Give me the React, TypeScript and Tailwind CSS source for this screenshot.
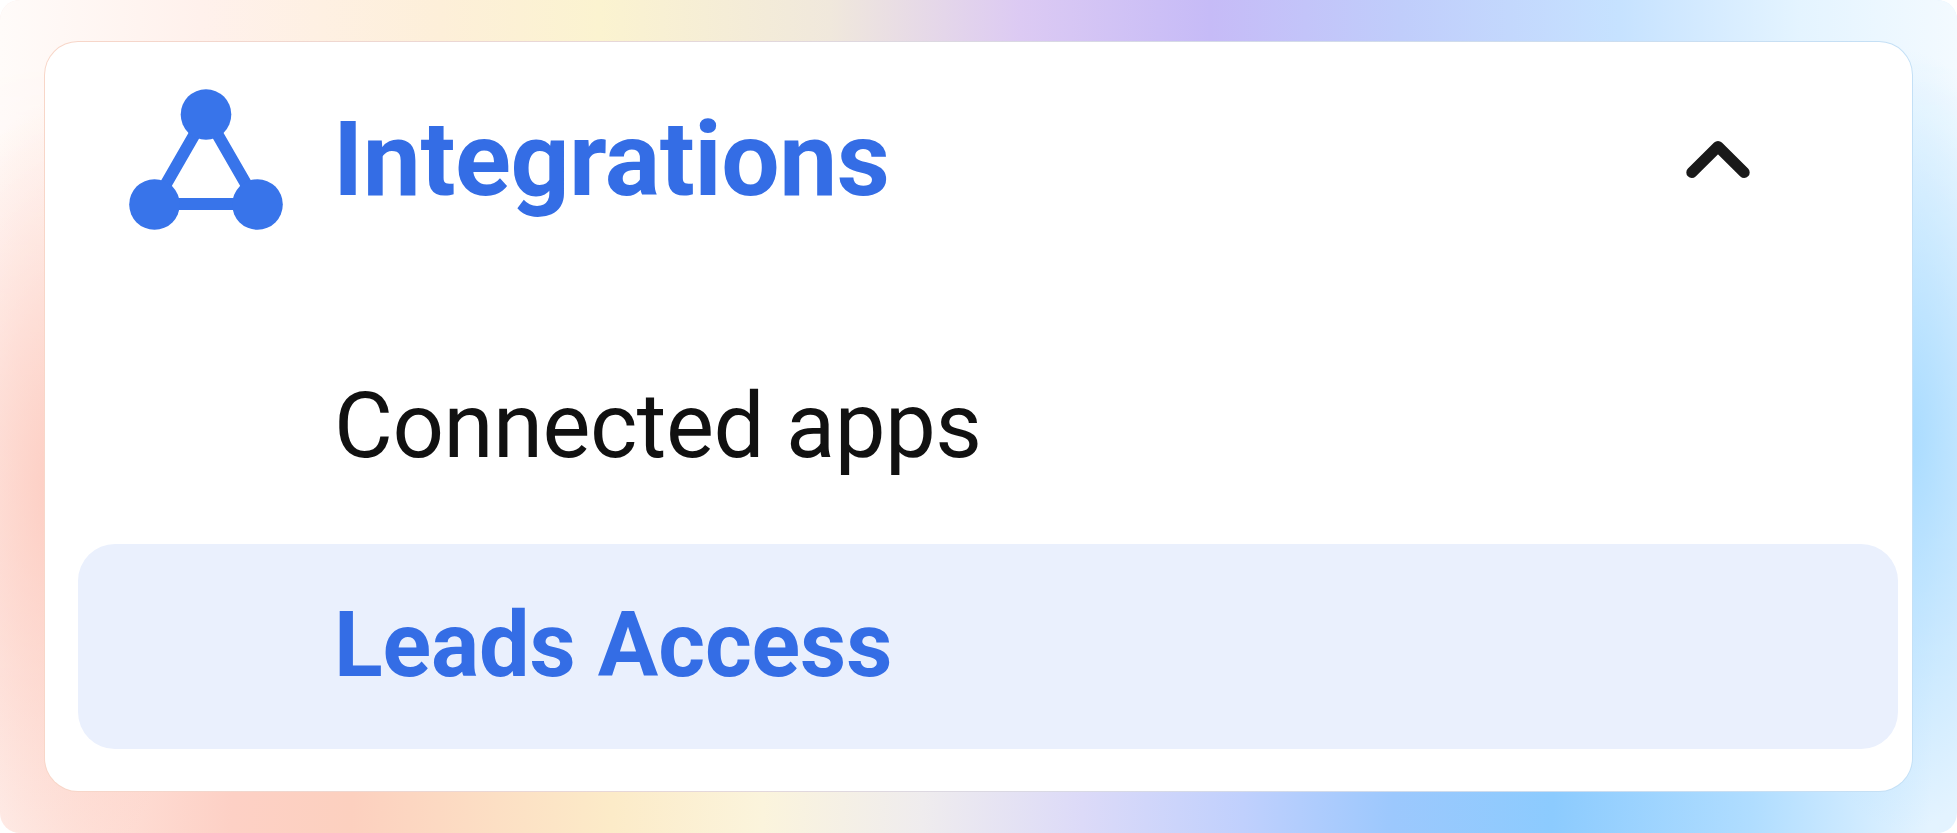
import React from 'react';

const ConnectionsIcon: React.FC = () => (
  <svg className="h-[142px] w-[155px] shrink-0" viewBox="0 0 155 142" fill="#3874ea">
    <path d="M78 26.5 L26.5 116 H129.5 Z" fill="none" stroke="#3874ea" strokeWidth="12" />
    <circle cx="78" cy="26.5" r="25.3" />
    <circle cx="26.5" cy="116.5" r="25.3" />
    <circle cx="129.5" cy="116.5" r="25.3" />
  </svg>
);

const ChevronUp: React.FC = () => (
  <svg className="h-10 w-16" viewBox="0 0 64 40" fill="none" stroke="#191919" strokeWidth="11" strokeLinecap="round" strokeLinejoin="round">
    <path d="M5.8 32.5 L32 6.5 L58.2 32.5" />
  </svg>
);

const App: React.FC = () => {
  return (
    <div className="h-[833px] w-[1957px] bg-white font-['Roboto',sans-serif]">
      <div className="relative h-full overflow-hidden rounded-[20px] bg-[linear-gradient(92deg,#feefeb_0px,#fee0d8_120px,#fdd0c5_260px,#fcd0bf_380px,#fcebc8_640px,#fbf4dc_790px,#efecee_950px,#dcdaf8_1110px,#c0d0fd_1270px,#9cc8fd_1420px,#8ccbfe_1580px,#b0ddff_1780px,#e3f3ff_1957px)] px-[44px] pt-[41px] pb-[41px]">
        {/* Soft colour glow around the card */}
        <div className="absolute inset-0 bg-[linear-gradient(90deg,#fffbf9_0px,#fff1ec_200px,#fdefd9_440px,#fbf3d0_600px,#f0e8dc_830px,#dccaf3_1020px,#c6bbf7_1210px,#c0cdfb_1400px,#c6e2ff_1620px,#e4f4ff_1800px,#f3faff_1957px)] mask-[linear-gradient(#000_0px,#000_50px,transparent_700px)]" />
        <div className="absolute inset-0 bg-[radial-gradient(ellipse_150px_390px_at_60px_490px,#fdcdc2,transparent),radial-gradient(ellipse_150px_390px_at_1905px_440px,#a8dbff,transparent)]" />

        {/* Card */}
        <div className="relative h-full rounded-[34px] bg-linear-to-r from-[#f8d6c8] via-[#dbd8e2] to-[#c4e0f6] p-px">
          <div className="h-full rounded-[33px] bg-white pt-[46px]">
            <div className="flex h-[144px] items-start pl-[83px]">
              <ConnectionsIcon />
              <span className="ml-[50px] text-[103.5px] leading-[143px] font-bold tracking-[-0.45px] whitespace-nowrap text-[#346de5]">Integrations</span>
              <div className="mt-[52px] mr-[162px] ml-auto">
                <ChevronUp />
              </div>
            </div>
            <div className="mt-[92px] flex h-[205px] items-center pl-[289px] text-[90.5px] tracking-[-0.5px] whitespace-nowrap text-[#111]">
              Connected apps
            </div>
            <div className="mt-[14.5px] mr-[14.5px] ml-[33px] flex h-[205px] items-center rounded-[37px] bg-[#eaf0fd] pb-[2px] pl-[256px] text-[90px] font-bold tracking-[-0.15px] whitespace-nowrap text-[#346de5]">
              Leads Access
            </div>
          </div>
        </div>
      </div>
    </div>
  );
};

export default App;
